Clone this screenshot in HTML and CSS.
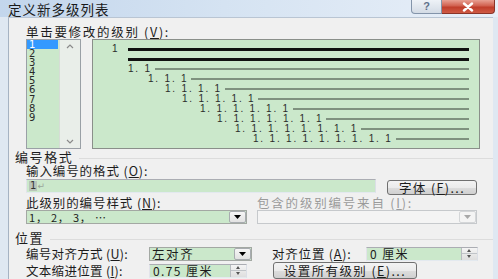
FILE: index.html
```html
<!DOCTYPE html>
<html lang="zh-CN">
  <head>
    <meta charset="UTF-8" />
    <title>定义新多级列表</title>
    <link rel="stylesheet" href="styles.css">
  </head>
  <body>
    <div class="dialog">
      <!-- 标题栏 -->
      <div class="titlebar">
        <span class="title">定义新多级列表</span>
        <span class="btn-help">?</span>
        <span class="btn-close">
          <svg width="14" height="10" viewBox="0 0 14 10"><path d="M3 1.5 L11 8.5 M11 1.5 L3 8.5" stroke="#fff" stroke-width="2.4" stroke-linecap="round"/></svg>
        </span>
      </div>

      <div class="frame">
        <div class="client">
          <div class="label indent top-label">单击要修改的级别 (<u>V</u>):</div>

          <div class="level-row">
            <!-- 级别列表 -->
            <div class="level-list">
              <div class="level-items">
                <div class="level-item selected">1</div>
                <div class="level-item">2</div>
                <div class="level-item">3</div>
                <div class="level-item">4</div>
                <div class="level-item">5</div>
                <div class="level-item">6</div>
                <div class="level-item">7</div>
                <div class="level-item">8</div>
                <div class="level-item">9</div>
              </div>
              <div class="vscroll">
                <svg width="8" height="5" viewBox="0 0 8 5"><path d="M1 4 L4 1 L7 4" fill="none" stroke="#8a8a8a" stroke-width="1.2"/></svg>
                <svg width="8" height="5" viewBox="0 0 8 5"><path d="M1 1 L4 4 L7 1" fill="none" stroke="#8a8a8a" stroke-width="1.2"/></svg>
              </div>
            </div>

            <!-- 预览 -->
            <div class="preview">
              <div class="pv-row lv1"><span class="pv-num">1</span><span class="pv-line thick first"></span></div>
              <div class="pv-row lv1b"><span class="pv-line thick"></span></div>
              <div class="pv-row lv2"><span class="pv-num">1. 1</span><span class="pv-line"></span></div>
              <div class="pv-row lv3"><span class="pv-num">1. 1. 1</span><span class="pv-line"></span></div>
              <div class="pv-row lv4"><span class="pv-num">1. 1. 1. 1</span><span class="pv-line"></span></div>
              <div class="pv-row lv5"><span class="pv-num">1. 1. 1. 1. 1</span><span class="pv-line"></span></div>
              <div class="pv-row lv6"><span class="pv-num">1. 1. 1. 1. 1. 1</span><span class="pv-line"></span></div>
              <div class="pv-row lv7"><span class="pv-num">1. 1. 1. 1. 1. 1. 1</span><span class="pv-line"></span></div>
              <div class="pv-row lv8"><span class="pv-num">1. 1. 1. 1. 1. 1. 1. 1</span><span class="pv-line"></span></div>
              <div class="pv-row lv9"><span class="pv-num">1. 1. 1. 1. 1. 1. 1. 1. 1</span><span class="pv-line"></span></div>
            </div>
          </div>

          <!-- 编号格式 -->
          <div class="group-title">编号格式<span class="group-line"></span></div>
          <div class="label fmt-label indent">输入编号的格式 (<u>O</u>):</div>
          <div class="format-row indent">
            <div class="textbox format-input"><span class="sel-num">1</span><span class="para-mark">↵</span></div>
            <button class="btn font-btn">字体 (<u>F</u>)...</button>
          </div>

          <div class="style-labels indent">
            <div class="label fmt-label style-label">此级别的编号样式 (<u>N</u>):</div>
            <div class="label disabled">包含的级别编号来自 (<u>I</u>):</div>
          </div>
          <div class="style-row indent">
            <div class="combo style-combo">
              <span class="combo-text">1， 2， 3， …</span>
              <span class="combo-arrow"><svg width="7" height="4" viewBox="0 0 7 4"><path d="M0 0 H7 L3.5 4 Z" fill="#000"/></svg></span>
            </div>
            <div class="combo include-combo disabled-combo">
              <span class="combo-text"></span>
              <span class="combo-arrow"><svg width="7" height="4" viewBox="0 0 7 4"><path d="M0 0 H7 L3.5 4 Z" fill="#a8a8a8"/></svg></span>
            </div>
          </div>

          <!-- 位置 -->
          <div class="group-title pos-title">位置<span class="group-line"></span></div>
          <div class="pos-grid indent">
            <div class="label pos-label">编号对齐方式 (<u>U</u>):</div>
            <div class="combo align-combo">
              <span class="combo-text">左对齐</span>
              <span class="combo-arrow"><svg width="7" height="4" viewBox="0 0 7 4"><path d="M0 0 H7 L3.5 4 Z" fill="#000"/></svg></span>
            </div>
            <div class="label pos-label at-label">对齐位置 (<u>A</u>):</div>
            <div class="textbox spin">
              <span class="spin-text">0 厘米</span>
              <span class="spinner"><span></span><span></span></span>
            </div>

            <div class="label pos-label">文本缩进位置 (<u>I</u>):</div>
            <div class="textbox spin indent-input">
              <span class="spin-text">0.75 厘米</span>
              <span class="spinner"><span></span><span></span></span>
            </div>
            <button class="btn all-btn">设置所有级别 (<u>E</u>)...</button>
          </div>
        </div>
      </div>
    </div>
  </body>
</html>
```

FILE: styles.css
```css
/* 基本页面 */
body {
  margin: 0;
  width: 498px;
  height: 279px;
  overflow: hidden;
  font-family: 'Noto Sans CJK SC', 'Liberation Sans', sans-serif;
  font-size: 12.5px;
  color: #1c1c1c;
}

u {
  text-decoration: underline;
  text-underline-offset: 1px;
}

.dialog {
  height: 279px;
  display: flex;
  flex-direction: column;
  background: #dfe8f2;
}

/* 标题栏 */
.titlebar {
  height: 17px;
  display: flex;
  align-items: flex-start;
  background: linear-gradient(to right, #c3d6ec, #d5e3f2 45%, #e8eff8);
}

.title {
  margin: 1px 0 0 8px;
  font-size: 13.5px;
  letter-spacing: 1px;
  line-height: 16px;
  color: #1a1a1a;
}

.btn-help {
  margin-left: auto;
  width: 31px;
  height: 14px;
  box-sizing: border-box;
  border: 1px solid #8394aa;
  border-top: none;
  border-radius: 0 0 0 4px;
  background: linear-gradient(#eef2f7, #d3dbe5);
  color: #5f708a;
  font: bold 11px/13px 'Liberation Sans', sans-serif;
  text-align: center;
}

.btn-close {
  width: 53px;
  height: 14px;
  margin-right: 3px;
  box-sizing: border-box;
  border: 1px solid #8a3429;
  border-top: none;
  border-left: none;
  border-radius: 0 0 4px 0;
  background: linear-gradient(#e8a093, #d1604f 45%, #c03d2b 55%, #cf5b45);
  display: flex;
  align-items: center;
  justify-content: center;
}

/* 窗口主体 */
.frame {
  flex: 1;
  display: flex;
  padding: 0 5px 0 8px;
}

.client {
  flex: 1;
  background: #f0f0f0;
  border-left: 1px solid #a6b3c3;
  border-top: 1px solid #b9c5d3;
  padding-left: 6px;
}

.indent {
  margin-left: 11px;
}

.label {
  line-height: 14px;
  letter-spacing: 1.7px;
  white-space: nowrap;
}

.fmt-label {
  letter-spacing: 0.9px;
}

.pos-label {
  letter-spacing: 0.3px;
}

.label.disabled {
  color: #9b9b9b;
  letter-spacing: 1.8px;
}

.top-label {
  margin-top: 7px;
}

/* 级别列表与预览 */
.level-row {
  display: flex;
  height: 110px;
  margin-left: 11px;
}

.level-list {
  width: 55px;
  box-sizing: border-box;
  border: 1px solid #9aa0a6;
  background: #cbe8cb;
  display: flex;
}

.level-items {
  width: 32px;
}

.level-item {
  width: 31px;
  height: 9.1px;
  padding-left: 2px;
  box-sizing: border-box;
  font: 10px/9.1px 'DejaVu Sans', sans-serif;
  color: #2a2a2a;
}

.level-item.selected {
  background: #3399ff;
  color: #fff;
}

.vscroll {
  flex: 1;
  border-left: 1px solid #d6ddd6;
  background: #e9eee9;
  display: flex;
  flex-direction: column;
  align-items: center;
  justify-content: space-between;
  padding: 4px 0;
}

.preview {
  width: 388px;
  margin-left: 11px;
  box-sizing: border-box;
  border: 1px solid #8a8f8a;
  background: #cbe8cb;
  padding: 4px 10px 0 0;
}

.pv-row {
  display: flex;
  align-items: center;
  height: 10px;
}

.pv-num {
  font: 10px/10px 'Liberation Sans', sans-serif;
  letter-spacing: 1.8px;
  color: #2b2b2b;
  white-space: nowrap;
}

.pv-line {
  flex: 1;
  height: 2px;
  margin-left: 3px;
  background: #7f917f;
}

.pv-line.thick {
  height: 3px;
  background: #111;
  margin-left: 0;
}

.pv-line.thick.first {
  margin-left: 9px;
}

.lv1 { padding-left: 19px; }
.lv1b { padding-left: 35px; }
.lv2 { padding-left: 35px; }
.lv3 { padding-left: 55px; }
.lv4 { padding-left: 72px; }
.lv5 { padding-left: 89px; }
.lv6 { padding-left: 107px; }
.lv7 { padding-left: 124px; }
.lv8 { padding-left: 142px; }
.lv9 { padding-left: 160px; }

/* 分组标题 */
.group-title {
  display: flex;
  align-items: center;
  line-height: 15px;
  letter-spacing: 1.6px;
  font-size: 13px;
}

.group-line {
  flex: 1;
  height: 1px;
  margin: 3px 0 0 6px;
  background: #dcdcdc;
}

.pos-title {
  margin-top: 6px;
}

/* 输入框 */
.textbox {
  box-sizing: border-box;
  height: 14px;
  border: 1px solid;
  border-color: #abadb3 #dbdfe6 #e3e9ef #e2e3ea;
  background: #cbe8cb;
  display: flex;
  align-items: center;
}

.format-row {
  display: flex;
  align-items: flex-start;
  margin-top: 1px;
  height: 16px;
}

.format-input {
  width: 350px;
  padding-left: 2px;
  font: 10px 'DejaVu Sans', sans-serif;
}

.sel-num {
  background: #b9c4b9;
  color: #333;
  padding: 0 1px;
  line-height: 10px;
}

.para-mark {
  color: #9aa59a;
  font-size: 9px;
}

.btn {
  box-sizing: border-box;
  border: 1px solid #707070;
  border-radius: 3px;
  background: linear-gradient(#f3f3f3, #ebebeb 50%, #dddddd 51%, #d0d0d0);
  font-family: 'Noto Sans CJK SC', sans-serif;
  font-size: 12.5px;
  letter-spacing: 1.4px;
  color: #1c1c1c;
  padding: 0;
  line-height: 13px;
}

.font-btn {
  width: 90px;
  height: 15px;
  margin: 1px 0 0 11px;
}

.style-labels {
  display: flex;
  margin-top: 1px;
}

.style-label {
  width: 231px;
}

.style-row {
  display: flex;
  gap: 10px;
}

/* 下拉框 */
.combo {
  box-sizing: border-box;
  height: 14px;
  border: 1px solid #a3a8a3;
  background: #cbe8cb;
  display: flex;
  align-items: center;
}

.combo-text {
  flex: 1;
  padding-left: 2px;
  line-height: 12px;
  white-space: nowrap;
}

.style-combo {
  width: 221px;
}

.style-combo .combo-text {
  font-size: 11px;
  letter-spacing: 0.8px;
}

.include-combo {
  width: 220px;
}

.combo-arrow {
  width: 17px;
  height: 12px;
  box-sizing: border-box;
  border: 1px solid #a8acb0;
  border-radius: 2px;
  background: linear-gradient(#f6f6f6, #e2e2e2);
  display: flex;
  align-items: center;
  justify-content: center;
}

.disabled-combo {
  background: #f4f4f4;
  border-color: #c6c9cc;
}

.disabled-combo .combo-arrow {
  border-color: #d4d6d8;
  background: #f4f4f4;
}

/* 位置 */
.pos-grid {
  display: grid;
  grid-template-columns: 123px 103px 114px 112px;
  grid-template-rows: 15px 17px;
  row-gap: 1px;
  align-items: center;
  margin-top: 1px;
}

.at-label {
  margin-left: 20px;
  letter-spacing: 0.8px;
}

.align-combo {
  width: 103px;
}

.align-combo .combo-text {
  letter-spacing: 1.6px;
}

.spin {
  height: 14px;
}

.spin-text {
  flex: 1;
  padding-left: 3px;
  font-size: 12px;
  letter-spacing: 1.4px;
  line-height: 12px;
  white-space: nowrap;
}

.indent-input {
  width: 98px;
}

.spinner {
  width: 15px;
  height: 12px;
  display: flex;
  flex-direction: column;
  border-left: 1px solid #b8bcc0;
  background: linear-gradient(#f4f4f4, #dedede);
}

.spinner span {
  flex: 1;
  position: relative;
}

.spinner span + span {
  border-top: 1px solid #c0c4c8;
}

.spinner span::after {
  content: '';
  position: absolute;
  left: 5px;
  top: 1px;
  border-left: 2.5px solid transparent;
  border-right: 2.5px solid transparent;
}

.spinner span:first-child::after {
  border-bottom: 3px solid #555;
}

.spinner span + span::after {
  border-top: 3px solid #555;
}

.all-btn {
  grid-column: 3 / 5;
  width: 144px;
  height: 17px;
  margin-left: 21px;
}
```
